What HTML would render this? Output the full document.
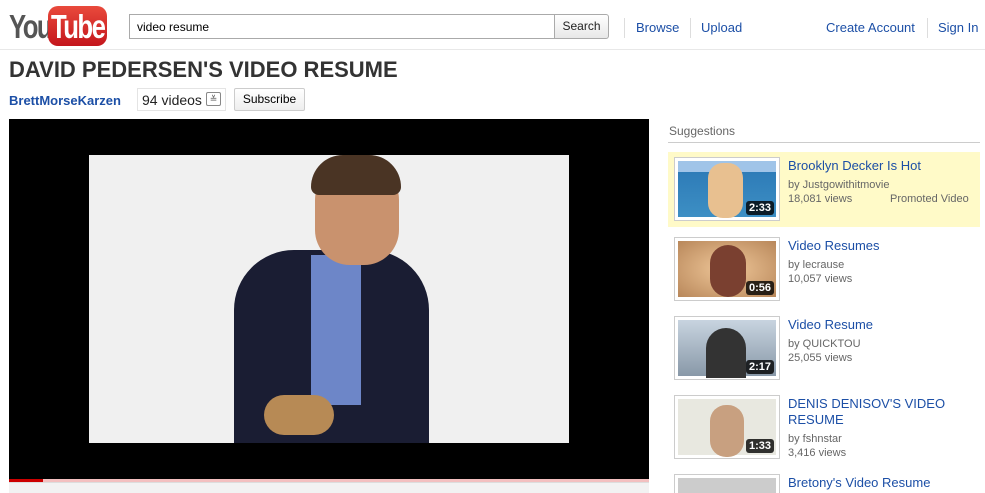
<!DOCTYPE html>
<html style="width:985px;height:493px;overflow:hidden"><head><meta charset="utf-8"><style>
*{margin:0;padding:0;box-sizing:border-box}
body{width:985px;height:493px;overflow:hidden;background:#fff;font-family:"Liberation Sans",Arial,sans-serif;position:relative}
a{color:#1c4fa6;text-decoration:none}
.abs{position:absolute}
.sep{position:absolute;top:18px;width:1px;height:20px;background:#ddd}
.item{position:absolute;left:668px;width:312px;height:78px}
.thumb{position:absolute;left:6px;top:5px;width:106px;height:64px;border:1px solid #ccc;background:#fff;padding:3px}
.thumb div{width:100%;height:100%;position:relative}
.dur{position:absolute;right:2px;bottom:2px;background:rgba(0,0,0,.8);color:#fff;font-weight:bold;font-size:11px;padding:1px 3px;border-radius:3px}
.t{position:absolute;left:120px;top:6px;font-size:13px;color:#1c4fa6;line-height:16px;width:185px}
.m{position:absolute;left:120px;font-size:11px;color:#666}
</style></head><body>
<div class="abs" style="left:0;top:49px;width:985px;height:1px;background:#e8e8e8"></div>
<div class="abs" style="left:9px;top:8px;font-size:33px;font-weight:bold;color:#555;letter-spacing:-2px;transform:scaleX(.78);transform-origin:left">You</div>
<div class="abs" style="left:48px;top:6px;width:59px;height:40px;border-radius:10px;background:linear-gradient(#e94a3c,#c4161c)"></div>
<div class="abs" style="left:51px;top:8px;font-size:33px;font-weight:bold;color:#fff;letter-spacing:-2px;transform:scaleX(.78);transform-origin:left">Tube</div>
<div class="abs" style="left:129px;top:14px;width:426px;height:25px;border:1px solid #aaa;font-size:12px;padding:5px 7px">video resume</div>
<div class="abs" style="left:554px;top:14px;width:55px;height:25px;border:1px solid #aaa;background:linear-gradient(#fff,#e8e8e8);font-size:12px;text-align:center;line-height:23px;border-radius:0 3px 3px 0;color:#222">Search</div>
<div class="sep" style="left:624px"></div>
<a class="abs" style="left:636px;top:20px;font-size:13px">Browse</a>
<div class="sep" style="left:690px"></div>
<a class="abs" style="left:701px;top:20px;font-size:13px">Upload</a>
<a class="abs" style="left:826px;top:20px;font-size:13px">Create Account</a>
<div class="sep" style="left:927px"></div>
<a class="abs" style="left:938px;top:20px;font-size:13px">Sign In</a>
<div class="abs" style="left:9px;top:57px;font-size:22px;font-weight:bold;color:#333;white-space:nowrap">DAVID PEDERSEN'S VIDEO RESUME</div>
<a class="abs" style="left:9px;top:93px;font-size:13px;font-weight:bold">BrettMorseKarzen</a>
<div class="abs" style="left:137px;top:88px;width:89px;height:23px;border:1px solid #e4e4e4;font-size:14px;padding:3px 4px;color:#222">94 videos</div>
<div class="abs" style="left:206px;top:92px;width:15px;height:14px;border:1px solid #888;border-radius:2px;font-size:9px;text-align:center;line-height:12px;color:#555">≚</div>
<div class="abs" style="left:234px;top:88px;width:71px;height:23px;border:1px solid #ccc;border-radius:2px;background:linear-gradient(#fff,#eee);font-size:12px;text-align:center;line-height:21px">Subscribe</div>
<div class="abs" style="left:9px;top:119px;width:640px;height:360px;background:#000"></div>
<div class="abs" style="left:89px;top:155px;width:480px;height:288px;background:#f0f0f0;overflow:hidden">
 <div class="abs" style="left:145px;top:95px;width:195px;height:200px;background:#1a1d33;border-radius:60px 60px 0 0"></div>
 <div class="abs" style="left:222px;top:100px;width:50px;height:150px;background:#6d86c8"></div>
 <div class="abs" style="left:226px;top:5px;width:84px;height:105px;background:#c9926e;border-radius:40px 40px 35px 35px"></div>
 <div class="abs" style="left:222px;top:0;width:90px;height:40px;background:#4a3424;border-radius:40px 40px 10px 10px"></div>
 <div class="abs" style="left:175px;top:240px;width:70px;height:40px;background:#b78a55;border-radius:30px"></div>
</div>
<div class="abs" style="left:9px;top:479px;width:640px;height:3px;background:#f3c0c0"></div>
<div class="abs" style="left:9px;top:479px;width:34px;height:3px;background:#c00"></div>
<div class="abs" style="left:9px;top:482px;width:640px;height:11px;background:#f2f2f2;border-top:1px solid #ddd"></div>
<div class="abs" style="left:669px;top:124px;font-size:12px;color:#666">Suggestions</div>
<div class="abs" style="left:668px;top:142px;width:312px;height:1px;background:#ccc"></div>
<div class="item" style="top:152px;height:75px;background:#fffac8">
 <div class="thumb"><div style="background:linear-gradient(#a0c4e8 0 20%,#2e7cb8 20%,#3d8fc4);"><div class="abs" style="left:30px;top:2px;width:35px;height:55px;background:#e8c090;border-radius:15px"></div><span class="dur">2:33</span></div></div>
 <a class="t">Brooklyn Decker Is Hot</a>
 <div class="m" style="top:27px">by Justgowithitmovie</div>
 <div class="m" style="top:41px">18,081 views<span style="position:absolute;left:102px;white-space:nowrap">Promoted Video</span></div>
</div>
<div class="item" style="top:232px">
 <div class="thumb"><div style="background:radial-gradient(#f0c89a,#b8875a)"><div class="abs" style="left:32px;top:4px;width:36px;height:52px;background:#7a4030;border-radius:18px"></div><span class="dur">0:56</span></div></div>
 <a class="t">Video Resumes</a>
 <div class="m" style="top:27px">by lecrause</div>
 <div class="m" style="top:41px">10,057 views</div>
</div>
<div class="item" style="top:311px">
 <div class="thumb"><div style="background:linear-gradient(#c8d4e0,#8898a8)"><div class="abs" style="left:28px;top:8px;width:40px;height:50px;background:#333;border-radius:20px 20px 0 0"></div><span class="dur">2:17</span></div></div>
 <a class="t">Video Resume</a>
 <div class="m" style="top:27px">by QUICKTOU</div>
 <div class="m" style="top:41px">25,055 views</div>
</div>
<div class="item" style="top:390px">
 <div class="thumb"><div style="background:#e8e8e0"><div class="abs" style="left:32px;top:6px;width:34px;height:52px;background:#c8a080;border-radius:16px"></div><span class="dur">1:33</span></div></div>
 <a class="t">DENIS DENISOV'S VIDEO RESUME</a>
 <div class="m" style="top:43px">by fshnstar</div>
 <div class="m" style="top:57px">3,416 views</div>
</div>
<div class="item" style="top:469px;height:24px;overflow:hidden">
 <div class="thumb"><div style="background:#ccc"></div></div>
 <a class="t">Bretony's Video Resume</a>
</div>
</body></html>
